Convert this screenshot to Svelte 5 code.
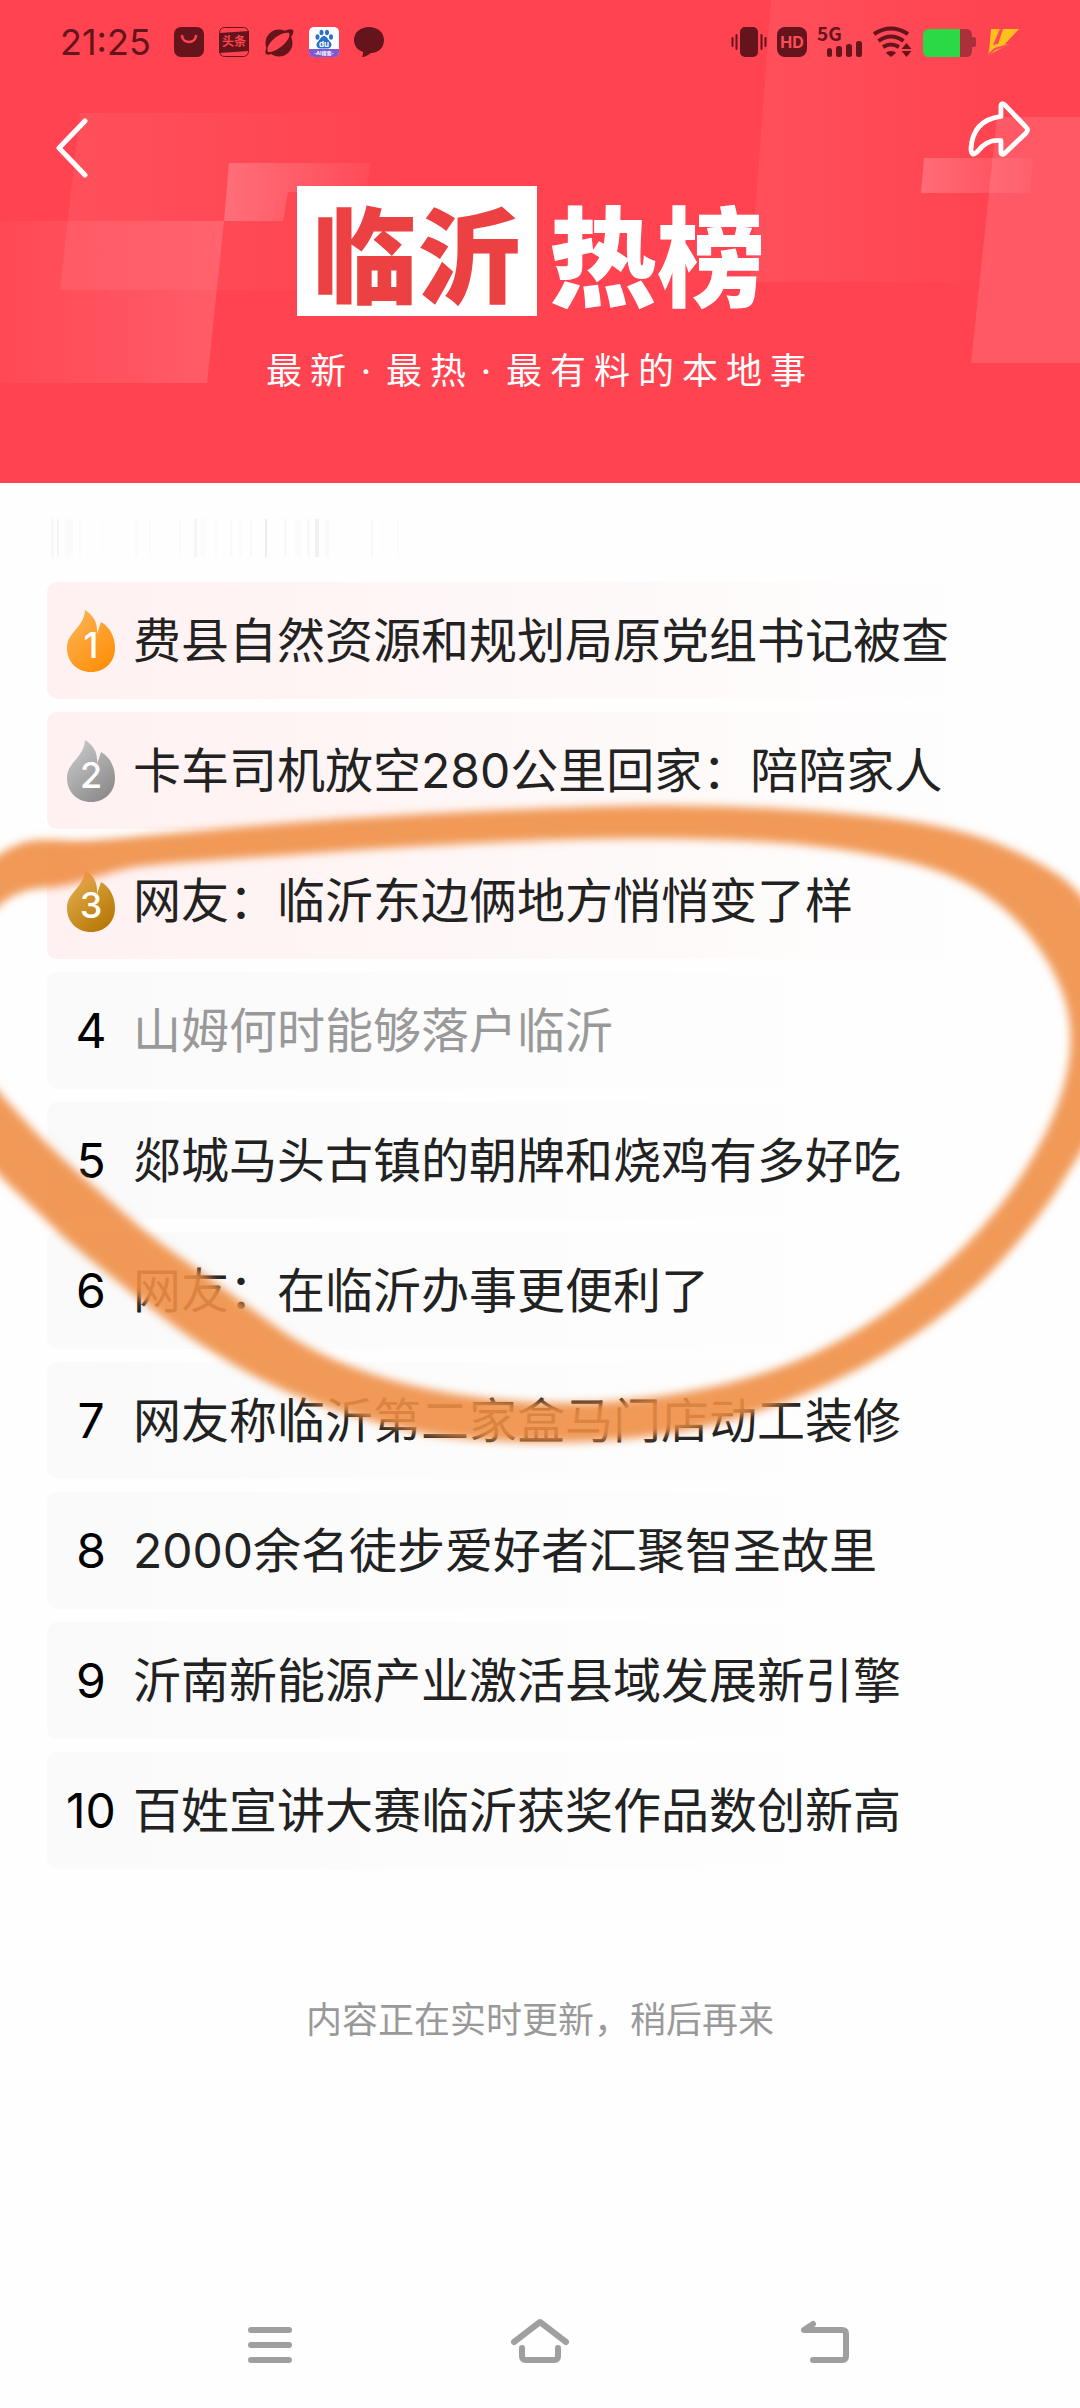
<script>
  const topics = [
    { rank: 1, title: "费县自然资源和规划局原党组书记被查", from: "#fbb75c", to: "#ff8f0a" },
    { rank: 2, title: "卡车司机放空280公里回家：陪陪家人", from: "#cfcfcf", to: "#8c8c8c" },
    { rank: 3, title: "网友：临沂东边俩地方悄悄变了样", from: "#e9b557", to: "#b87808" },
    { rank: 4, title: "山姆何时能够落户临沂", read: true },
    { rank: 5, title: "郯城马头古镇的朝牌和烧鸡有多好吃" },
    { rank: 6, title: "网友：在临沂办事更便利了" },
    { rank: 7, title: "网友称临沂第二家盒马门店动工装修" },
    { rank: 8, title: "2000余名徒步爱好者汇聚智圣故里" },
    { rank: 9, title: "沂南新能源产业激活县域发展新引擎" },
    { rank: 10, title: "百姓宣讲大赛临沂获奖作品数创新高" }
  ];

  // faint leftovers of the update line: x, width, strength
  const ghosts = [
    [4, 3, 0.06], [10, 2, 0.09], [18, 8, 0.03], [32, 2, 0.03], [54, 2, 0.02],
    [88, 3, 0.03], [102, 2, 0.03], [132, 2, 0.03], [147, 3, 0.07], [153, 6, 0.03],
    [168, 2, 0.03], [183, 2, 0.04], [192, 3, 0.03], [203, 2, 0.05], [218, 2, 0.15],
    [237, 3, 0.05], [248, 6, 0.03], [260, 3, 0.05], [268, 4, 0.11], [278, 4, 0.04],
    [324, 2, 0.04], [334, 2, 0.02], [350, 2, 0.03]
  ];

  // marker loop: outer edge clockwise, then the inner edge back
  const strokePoints = [
    [-20, 90], [0, 73], [22, 62], [45, 59], [83, 62], [172, 53], [344, 38], [517, 29],
    [689, 24], [861, 33], [964, 50], [1033, 78], [1085, 113], [1130, 200], [1130, 300],
    [1085, 365], [1040, 438], [964, 522], [860, 592], [740, 640], [650, 658], [550, 664],
    [448, 658], [400, 649], [333, 630], [267, 604], [200, 565], [150, 528], [117, 501],
    [67, 461], [40, 434], [0, 397], [-20, 370], [-20, 290], [0, 313], [33, 350], [67, 383],
    [100, 412], [150, 456], [200, 491], [250, 528], [310, 571], [400, 605], [510, 623],
    [620, 623], [740, 603], [840, 564], [930, 501], [1000, 430], [1047, 355], [1070, 290],
    [1071, 235], [1052, 185], [1012, 132], [950, 92], [861, 71], [758, 60], [600, 58],
    [413, 66], [275, 76], [138, 85], [103, 95], [60, 108], [30, 108], [0, 122], [-20, 150]
  ];

  function smooth(points) {
    const mid = (a, b) => `${(a[0] + b[0]) / 2} ${(a[1] + b[1]) / 2}`;
    let d = `M${mid(points[points.length - 1], points[0])}`;
    points.forEach((p, i) => {
      d += `Q${p[0]} ${p[1]} ${mid(p, points[(i + 1) % points.length])}`;
    });
    return d + "Z";
  }
</script>

<div class="page">
  <header class="banner">
    <svg class="blocks" viewBox="0 0 1080 483" preserveAspectRatio="none" aria-hidden="true">
      <defs>
        <linearGradient id="fade">
          <stop offset="0" stop-color="#fff" stop-opacity=".2" />
          <stop offset="1" stop-color="#fff" stop-opacity=".04" />
        </linearGradient>
        <linearGradient id="soft">
          <stop offset="0" stop-color="#fff" stop-opacity=".07" />
          <stop offset="1" stop-color="#fff" stop-opacity="0" />
        </linearGradient>
        <linearGradient id="rise">
          <stop offset="0" stop-color="#fff" stop-opacity=".03" />
          <stop offset="1" stop-color="#fff" stop-opacity=".14" />
        </linearGradient>
      </defs>
      <path d="M80 113H405L385 290H60Z" fill="url(#soft)" />
      <path d="M0 221H224L207 383H0Z" fill="url(#rise)" />
      <path d="M229 163H371L366 192H288L283 221H224Z" fill="url(#fade)" />
      <path d="M771 0H1010L990 282H750Z" fill="url(#soft)" />
      <path d="M997 117H1080V363H971Z" fill="#fff" fill-opacity=".12" />
      <path d="M924 158H1033L1030 193H921Z" fill="url(#fade)" />
    </svg>

    <div class="status">
      <div class="status-side">
        <time>21:25</time>
        <svg width="30" height="32" viewBox="0 0 30 32" aria-hidden="true">
          <rect y="1" width="30" height="30" rx="7" fill="#65141c" />
          <path d="M8 10c1 8 13 8 14 0" fill="none" stroke="#ff4350" stroke-width="2.6" stroke-linecap="round" />
        </svg>
        <svg width="30" height="32" viewBox="0 0 30 32" aria-hidden="true">
          <rect x=".5" y="1.5" width="29" height="29" rx="5" fill="none" stroke="#65141c" />
          <path d="M0 7L30 5V25L0 27Z" fill="#65141c" />
          <text x="15" y="20" text-anchor="middle" font-size="12" font-weight="700" fill="#ff4350">头条</text>
        </svg>
        <svg width="30" height="32" viewBox="0 0 30 32" aria-hidden="true">
          <circle cx="15" cy="17" r="13.5" fill="#65141c" />
          <path d="M2 28C-3 21 22-1 29 4C33 9 8 33 2 28Z" fill="#65141c" />
          <path d="M4 26C0 19 16 5 25 7C28 13 13 27 4 26Z" fill="#ff4350" />
        </svg>
        <svg width="30" height="32" viewBox="0 0 30 32" aria-hidden="true">
          <rect y="1" width="30" height="30" rx="5" fill="#fff" />
          <path d="M0 23H30V26Q30 31 25 31H5Q0 31 0 26Z" fill="#7a5ad6" />
          <g fill="#2a70c8">
            <ellipse cx="8.5" cy="11" rx="2" ry="2.8" />
            <ellipse cx="12.5" cy="6.5" rx="2" ry="2.8" />
            <ellipse cx="18" cy="6.5" rx="2" ry="2.8" />
            <ellipse cx="22" cy="11" rx="2" ry="2.8" />
            <path d="M15 10c3 0 4 4 6 5.5c3 3 1 7-2 7h-8c-3 0-5-4-2-7c2-1.500 3-5.500 6-5.500Z" />
          </g>
          <text x="15" y="21" text-anchor="middle" font-size="8" font-weight="700" fill="#fff">du</text>
          <text x="15" y="29" text-anchor="middle" font-size="5" font-weight="700" fill="#fff">-AI搜索-</text>
        </svg>
        <svg width="30" height="32" viewBox="0 0 30 32" aria-hidden="true">
          <path d="M15 1c8 0 15 5 15 13s-6 13-13 13c-3 2-6 4-9 4c1-2 1-3 1-5C3 24 0 19 0 14C0 6 7 1 15 1Z" fill="#65141c" />
        </svg>
      </div>

      <div class="status-side right">
        <svg width="36" height="32" viewBox="0 0 36 32" aria-hidden="true">
          <rect x="9" y="1" width="18" height="30" rx="5" fill="#65141c" />
          <path d="M1.500 12V20M5.500 9V23M30.500 9V23M34.500 12V20" stroke="#65141c" stroke-width="2" stroke-linecap="round" />
        </svg>
        <svg width="30" height="32" viewBox="0 0 30 32" aria-hidden="true">
          <rect y="1" width="30" height="30" rx="8" fill="#65141c" />
          <text x="15" y="22" text-anchor="middle" font-size="16" font-weight="700" fill="#ff4e5a">HD</text>
        </svg>
        <svg class="signal" width="45" height="32" viewBox="0 0 45 32" aria-hidden="true">
          <text x="0" y="15" font-size="19" font-weight="700" fill="#65141c">5G</text>
          <g fill="#65141c">
            <rect x="10" y="22" width="5" height="9" rx="2.500" />
            <rect x="19" y="20" width="6" height="11" rx="2.500" />
            <rect x="29" y="18" width="6" height="13" rx="2.500" />
            <rect x="39" y="15" width="6" height="16" rx="2.500" />
          </g>
        </svg>
        <svg width="40" height="32" viewBox="0 0 40 32" aria-hidden="true">
          <path d="M2 8Q19-3 36 8M6.500 15Q19 6 31.500 15M11 21Q19 16 27 21" fill="none" stroke="#65141c" stroke-width="4" />
          <path d="M19 25q4 0 5 2l-5 4l-5-4q1-2 5-2ZM34.500 17l5 6h-10ZM34.500 31l-5-6h10Z" fill="#65141c" />
        </svg>
        <svg width="54" height="32" viewBox="0 0 54 32" aria-hidden="true">
          <path d="M38 3H44Q50 3 50 9V11H52Q54 11 54 13V19Q54 21 52 21H50V25Q50 31 44 31H38Z" fill="#ab303c" />
          <path d="M8 3H38V31H8Q1 31 1 25V9Q1 3 8 3Z" fill="#2bd845" />
        </svg>
        <svg width="34" height="32" viewBox="0 0 34 32" aria-hidden="true">
          <path d="M5 3H14L8 20L3 26ZM17 3H33L19 18H23L1 30L5 21L9 18L12 18Z" fill="#ffc01e" />
          <path d="M15 3L8 19M1 30L9 23L22 19" fill="none" stroke="#ff4e5a" stroke-width="2" />
        </svg>
      </div>
    </div>

    <div class="toolbar">
      <button class="back" aria-label="返回">
        <svg width="34" height="60" viewBox="0 0 34 60">
          <path d="M29 3L3 30L29 57" fill="none" stroke="#fff" stroke-width="5" stroke-linecap="round" stroke-linejoin="round" />
        </svg>
      </button>
      <button class="share" aria-label="分享">
        <svg width="62" height="58" viewBox="0 0 64 60">
          <path d="M34 6Q34 1 38 4L60 27Q63 30 60 33L38 54Q34 57 34 52V41Q20 39 10 52Q3 59 3 49Q5 20 34 16Z" fill="none" stroke="#fff" stroke-width="5" stroke-linejoin="round" />
        </svg>
      </button>
    </div>

    <h1><span class="city">临沂</span><span>热榜</span></h1>
    <p class="slogan">最新<i>·</i>最热<i>·</i>最有料的本地事</p>
  </header>

  <main>
    <svg class="ghost" width="360" height="46" viewBox="0 0 360 46" aria-hidden="true">
      {#each ghosts as [x, w, o]}
        <rect {x} y="4" width={w} height="38" fill="#000" fill-opacity={o * 0.45} />
      {/each}
    </svg>

    <ol>
      {#each topics as topic}
        <li class:top={topic.rank <= 3} class:read={topic.read}>
          <a href="#topic-{topic.rank}">
            <span class="rank">
              {#if topic.rank <= 3}
                <svg width="48" height="62" viewBox="0 0 48 62" aria-hidden="true">
                  <defs>
                    <linearGradient id="flame-{topic.rank}" x1="0" y1="0" x2=".7" y2="1">
                      <stop offset="0" stop-color={topic.from} />
                      <stop offset="1" stop-color={topic.to} />
                    </linearGradient>
                  </defs>
                  <path d="M18 0C26 5 31 12 30 24L34 12C43 17 48 27 48 38C48 52 38 62 24 62S0 52 0 38C0 22 17 18 18 0Z" fill="url(#flame-{topic.rank})" />
                </svg>
              {/if}
              <b>{topic.rank}</b>
            </span>
            <span class="title">{topic.title}</span>
          </a>
        </li>
      {/each}
    </ol>

    <p class="note">内容正在实时更新，稍后再来</p>
  </main>

  <nav>
    <button aria-label="最近任务">
      <svg width="80" height="60" viewBox="0 0 80 60">
        <path d="M21 15H59M21 30H59M21 45H59" />
      </svg>
    </button>
    <button aria-label="主页">
      <svg width="80" height="60" viewBox="0 0 80 60">
        <path d="M14 27L40 7L66 27M22 33V41Q22 45 26 45H54Q58 45 58 41V33" />
      </svg>
    </button>
    <button aria-label="返回上一级">
      <svg width="80" height="60" viewBox="0 0 80 60">
        <path d="M43 9L34 15H72Q76 15 76 19V41Q76 45 72 45H43" />
      </svg>
    </button>
  </nav>

  <svg class="marker" viewBox="0 0 1080 700" preserveAspectRatio="none" aria-hidden="true">
    <defs>
      <filter id="brush" x="-5%" y="-5%" width="110%" height="110%">
        <feGaussianBlur stdDeviation="4" />
      </filter>
    </defs>
    <path d={smooth(strokePoints)} fill="#ef8f45" fill-opacity=".9" filter="url(#brush)" />
  </svg>
</div>

<style>
  :global(body) {
    margin: 0;
    background: #fff;
  }

  .page {
    position: relative;
    min-height: 100vh;
    display: flex;
    flex-direction: column;
    overflow: hidden;
    background: #fefefe;
    font-family: Inter, "Noto Sans CJK SC", sans-serif;
    color: #222;
  }

  button {
    padding: 0;
    border: 0;
    background: none;
    cursor: pointer;
  }

  svg {
    display: block;
  }

  .banner {
    position: relative;
    height: 483px;
    background: #ff4350;
    color: #fff;
  }

  .blocks {
    position: absolute;
    inset: 0;
    width: 100%;
    height: 100%;
  }

  .status {
    position: relative;
    display: flex;
    justify-content: space-between;
    align-items: center;
    height: 84px;
    padding: 0 60px;
  }

  .status-side {
    display: flex;
    align-items: center;
    gap: 15px;
  }

  .status-side.right {
    gap: 10px;
  }

  .signal {
    overflow: visible;
    font-family: "Noto Sans CJK SC", sans-serif;
  }

  time {
    margin-right: 8px;
    font-size: 36px;
    color: #65141c;
  }

  .toolbar {
    position: relative;
    display: flex;
    justify-content: space-between;
    height: 102px;
    padding: 16px 50px 0 56px;
    box-sizing: border-box;
  }

  .back,
  .share {
    height: 60px;
  }

  .back {
    padding-top: 18px;
  }

  h1 {
    position: relative;
    display: flex;
    justify-content: center;
    align-items: center;
    gap: 12px;
    margin: 0;
    padding-right: 18px;
    font-family: "Noto Sans CJK SC", sans-serif;
    font-size: 108px;
    font-weight: 900;
    line-height: 130px;
  }

  .city {
    padding: 0 16px;
    background: #fff;
    color: #ec4142;
    font-size: 104px;
  }

  .slogan {
    position: relative;
    display: flex;
    justify-content: center;
    margin: 30px 0 0;
    font-size: 36px;
    line-height: 50px;
    letter-spacing: 8px;
  }

  .slogan i {
    width: 32px;
    text-align: center;
    font-style: normal;
  }

  main {
    flex: 1;
    padding: 0 47px;
  }

  .ghost {
    margin-top: 32px;
  }

  ol {
    display: flex;
    flex-direction: column;
    gap: 13px;
    margin: 21px 0 0;
    padding: 0;
    list-style: none;
  }

  li {
    border-radius: 10px;
    background: linear-gradient(90deg, #fafafa, #fefefe 85%);
  }

  li.top {
    background: linear-gradient(90deg, #fff1f1, #fefefe 95%);
  }

  a {
    display: flex;
    align-items: center;
    height: 117px;
    padding-left: 16px;
    color: inherit;
    text-decoration: none;
  }

  .rank {
    display: grid;
    place-items: center;
    width: 56px;
    margin-right: 14px;
    color: #000;
  }

  .rank svg,
  .rank b {
    grid-area: 1 / 1;
  }

  .rank b {
    font-size: 48px;
    font-weight: 400;
  }

  .top .rank b {
    padding-top: 8px;
    color: #fff;
    font-size: 36px;
    font-weight: 500;
  }

  .title {
    font-size: 48px;
    line-height: 72px;
    white-space: nowrap;
  }

  .read .title {
    color: #999;
  }

  .note {
    margin: 124px 0 0;
    text-align: center;
    font-size: 36px;
    line-height: 54px;
    color: #999;
  }

  nav {
    display: grid;
    grid-template-columns: repeat(3, 1fr);
    padding: 0 12.5% 33px;
  }

  nav button {
    display: flex;
    justify-content: center;
  }

  nav path {
    fill: none;
    stroke: #9f9f9f;
    stroke-width: 6;
    stroke-linecap: round;
    stroke-linejoin: round;
  }

  .marker {
    position: absolute;
    top: 780px;
    left: 0;
    width: 100%;
    height: 700px;
    pointer-events: none;
  }
</style>
